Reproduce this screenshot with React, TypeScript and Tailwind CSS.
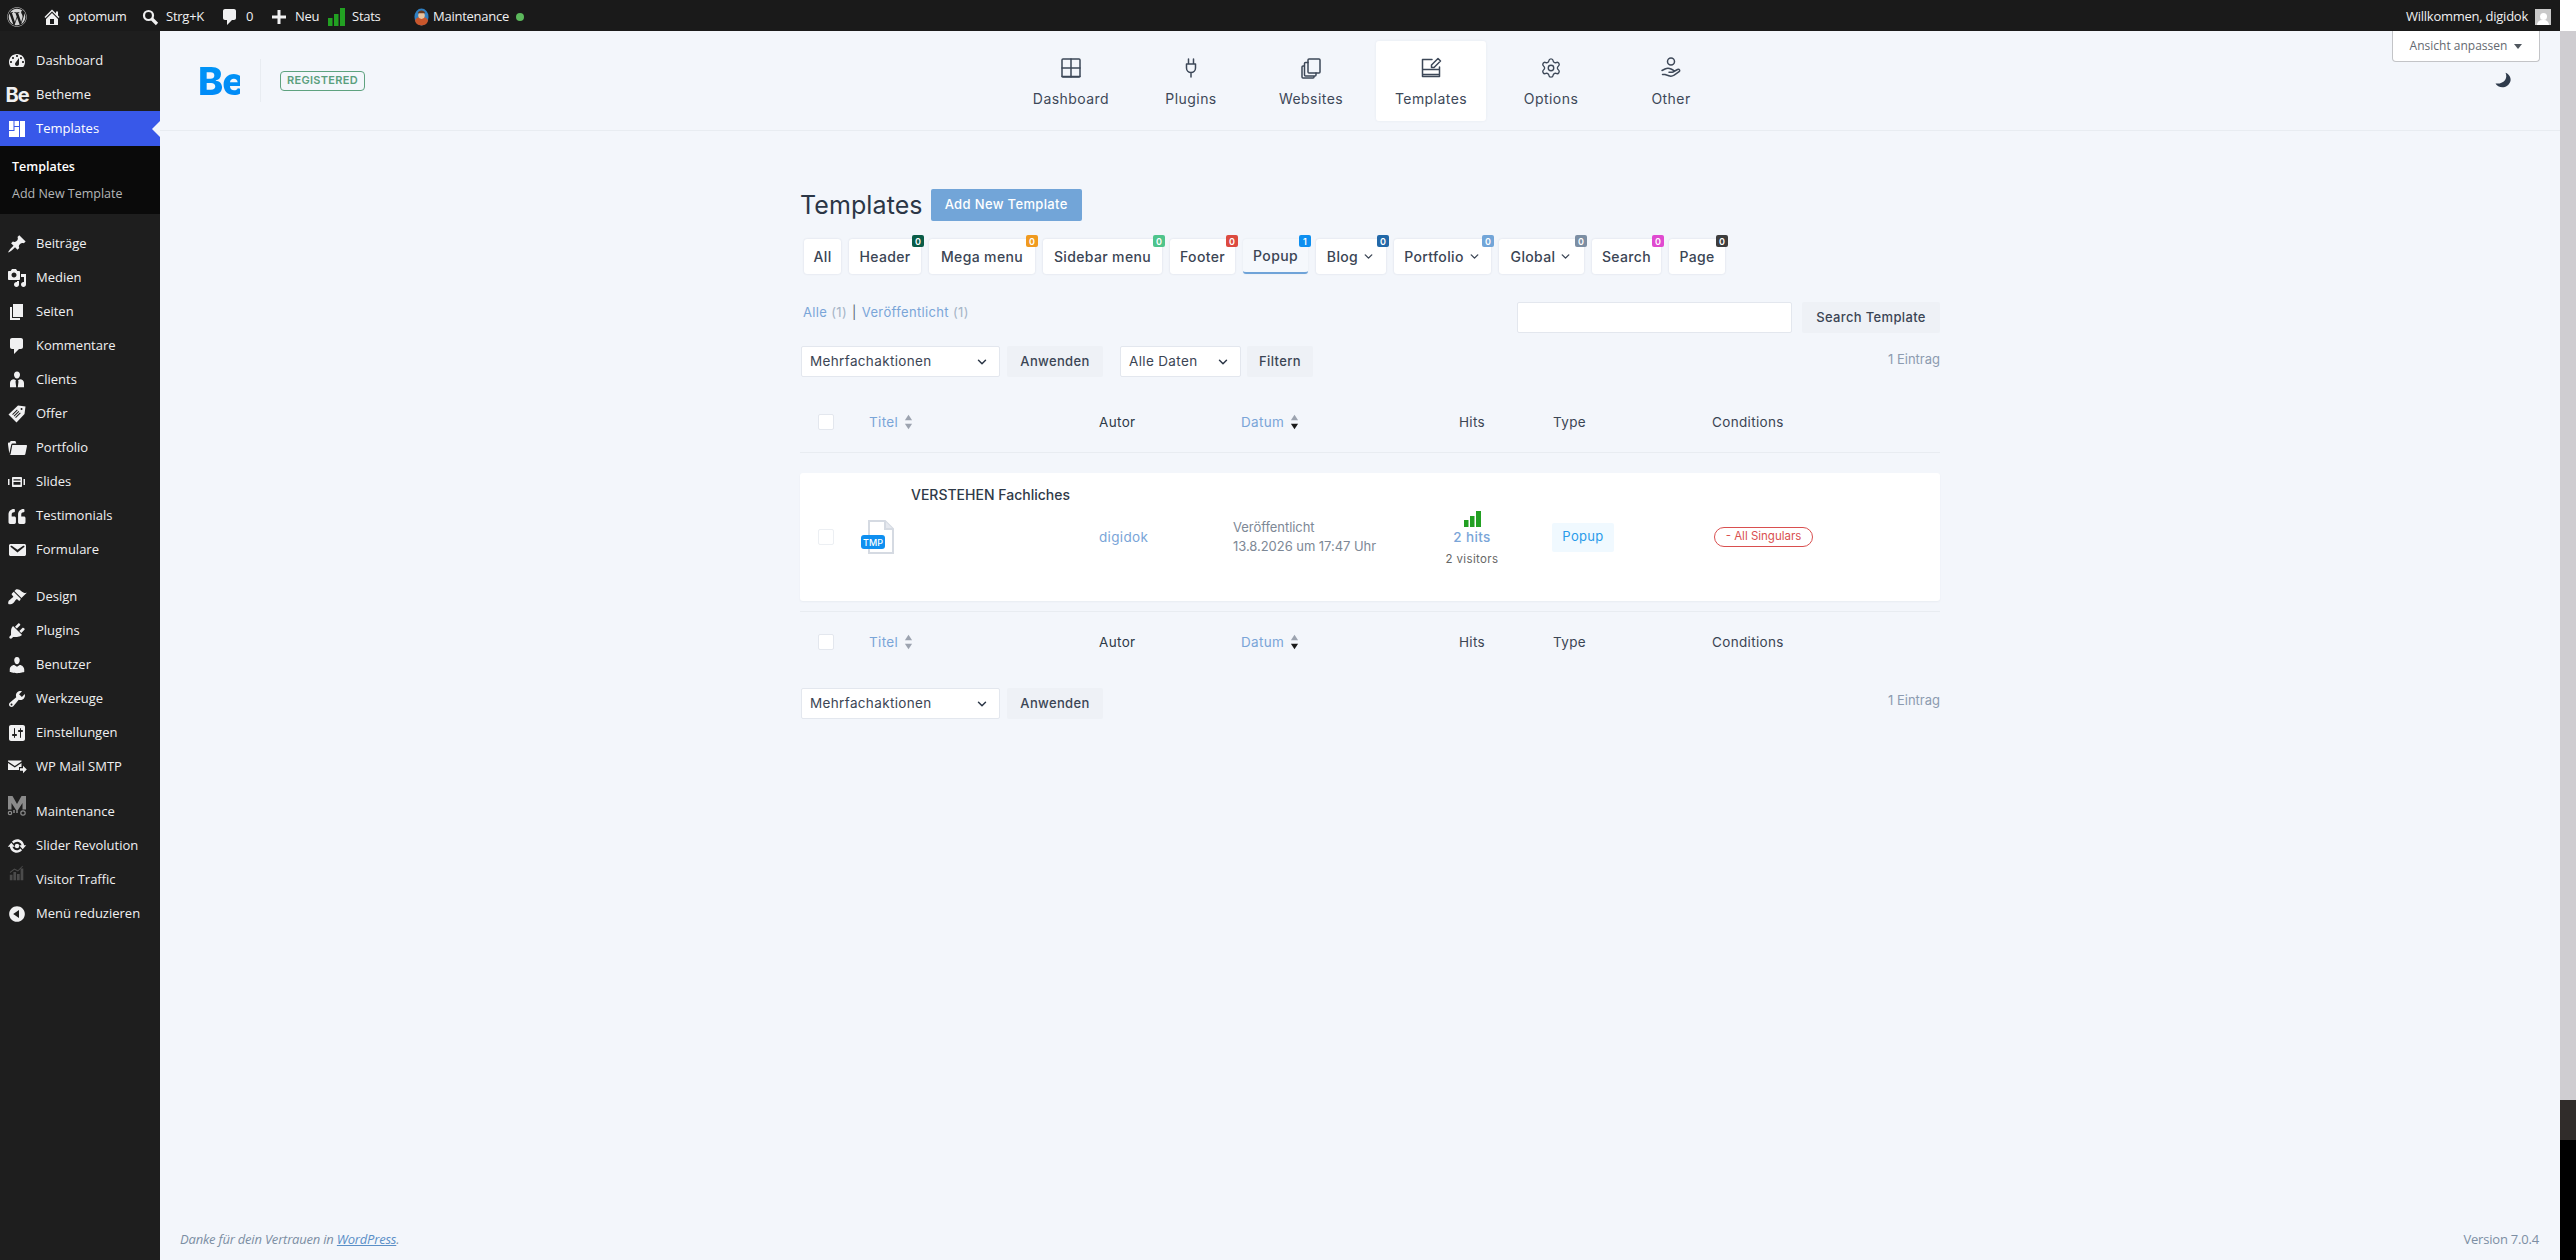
import React from "react";
import { FaWordpress, FaQuoteLeft } from "react-icons/fa";
import { Settings, ChevronDown } from "lucide-react";

const D = ({ d, className = "" }: { d: string; className?: string }) => (
  <svg viewBox="0 0 20 20" className={"w-5 h-5 fill-current " + className}>
    <path fillRule="evenodd" d={d} />
  </svg>
);

const P = {
  dashboard:
    "M3.76 16h12.48c1.1-1.37 1.76-3.11 1.76-5 0-4.42-3.58-8-8-8s-8 3.58-8 8c0 1.89.66 3.63 1.76 5zM10 4c.55 0 1 .45 1 1s-.45 1-1 1-1-.45-1-1 .45-1 1-1zM6 6c.55 0 1 .45 1 1s-.45 1-1 1-1-.45-1-1 .45-1 1-1zm8 0c.55 0 1 .45 1 1s-.45 1-1 1-1-.45-1-1 .45-1 1-1zm-5.37 5.55L12 7v6c0 1.1-.9 2-2 2s-2-.9-2-2c0-.57.24-1.08.63-1.45zM4 10c.55 0 1 .45 1 1s-.45 1-1 1-1-.45-1-1 .45-1 1-1zm12 0c.55 0 1 .45 1 1s-.45 1-1 1-1-.45-1-1 .45-1 1-1z",
  pin: "M10.44 3.02l1.82-1.82 6.36 6.35-1.83 1.82c-1.05-.68-2.48-.57-3.41.36l-.75.75c-.92.93-1.04 2.35-.35 3.41l-1.83 1.82-2.41-2.41-2.8 2.79c-.42.42-3.38 2.71-3.8 2.29s1.86-3.39 2.28-3.81l2.79-2.79L4.1 9.36l1.83-1.82c1.05.69 2.48.57 3.4-.36l.75-.75c.93-.92 1.05-2.35.36-3.41z",
  media:
    "M13 11V4c0-.55-.45-1-1-1h-1.67L9 1H5L3.67 3H2c-.55 0-1 .45-1 1v7c0 .55.45 1 1 1h10c.55 0 1-.45 1-1zM7 4.5c1.38 0 2.5 1.12 2.5 2.5S8.38 9.5 7 9.5 4.5 8.38 4.5 7 5.62 4.5 7 4.5zM14 6h5v10.5c0 1.38-1.12 2.5-2.5 2.5S14 17.88 14 16.5s1.12-2.5 2.5-2.5c.17 0 .34.02.5.05V9h-3V6zm-4 8.05V13h2v3.5c0 1.38-1.12 2.5-2.5 2.5S7 17.88 7 16.5 8.12 14 9.5 14c.17 0 .34.02.5.05z",
  page: "M6 15V2h10v13H6zm-1 1h8v2H3V5h2v11z",
  comment: "M5 2h9c1.1 0 2 .9 2 2v7c0 1.1-.9 2-2 2h-2l-5 5v-5H5c-1.1 0-2-.9-2-2V4c0-1.1.9-2 2-2z",
  users:
    "M10 9.25c-2.27 0-2.73-3.44-2.73-3.44C7 4.02 7.82 2 9.97 2c2.16 0 2.98 2.02 2.71 3.81 0 0-.41 3.44-2.68 3.44zm0 2.57L12.72 10c2.39 0 4.52 2.33 4.52 4.53v2.49s-3.65 1.13-7.24 1.13c-3.65 0-7.24-1.13-7.24-1.13v-2.49c0-2.25 1.94-4.48 4.47-4.48z",
  client:
    "M10 1.5c1.9 0 3 1.4 3 3.2S11.9 8.5 10 8.5 7 6.500 7 4.700 8.100 1.500 10 1.500zM7 9.300l2.100 1.200-.6 1 .7 5.800H3v-4.300c0-2 1.800-3.700 4-3.700zm6 0c2.200 0 4 1.700 4 3.700v4.300h-6.200l.7-5.800-.6-1z",
  offer:
    "M11 1.500l7.500 1-1 7.500-8 8.500L1.500 10.500zM14.500 4a1 1 0 1 0 .1 2 1 1 0 0 0-.1-2zM10 5.500l-4.800 4.800.7.700 4.800-4.800zm1.500 1.500l-4.800 4.800.7.700 4.800-4.800zM13 8.500l-4.800 4.800.7.700 4.800-4.800z",
  folder:
    "M1 5.500c0-.6.4-1 1-1h1l.6-1.500h4.800l.6 1.500 .3 1H5.500c-.6 0-1 .4-1.200 1L2.300 15.500 1 6.500zM5.300 7h14c.5 0 .8.400.7.900l-1.700 8.300c-.1.500-.5.800-1 .8H2.500c.5 0 1-.3 1.100-.8z",
  slides:
    "M6 5h8c.6 0 1 .4 1 1v8c0 .6-.4 1-1 1H6c-.6 0-1-.4-1-1V6c0-.6.4-1 1-1zm.5 2.200v1.300h7V7.200zm0 2.800v2.800h7V10zM1 7h1.500v6H1zm3 -.5v0zM16.500 7H18v6h-1.500z",
  mail: "M3.870 4h13.250C18.370 4 19 4.590 19 5.790v8.420c0 1.190-.63 1.790-1.880 1.790H3.870c-1.250 0-1.880-.6-1.880-1.790V5.790c0-1.200.63-1.790 1.880-1.790zm6.620 8.600l6.740-5.530c.24-.2.43-.66.13-1.070-.29-.41-.82-.42-1.170-.17l-5.700 3.860L4.800 5.830c-.35-.25-.88-.24-1.170.17-.3.41-.11.87.13 1.070z",
  brush:
    "M14.480 11.060L7.410 3.990l1.500-1.500c.5-.56 2.300-.47 3.510.32 1.210.8 1.430 1.280 2.910 2.100 1.180.64 2.450 1.260 4.450.85zm-.71.71L6.700 4.700 4.930 6.470c-.39.39-.39 1.020 0 1.410l1.060 1.060c.39.39.39 1.030 0 1.420-.6.6-1.430 1.110-2.210 1.690-.35.26-.7.53-1.010.84C1.430 13.230.78 15.780 1.400 17.070c1.290.62 3.840-.03 5.180-1.370.31-.31.58-.66.85-1.020.57-.78 1.080-1.610 1.690-2.210.39-.39 1.020-.39 1.410 0l1.060 1.060c.39.39 1.020.39 1.410 0z",
  plugin:
    "M13.110 4.360L9.870 7.600 8 5.730l3.240-3.240c.35-.34 1.050-.2 1.560.32.52.51.66 1.210.31 1.550zm-8 1.770l.91-1.120 9.010 9.010-1.190.84c-.71.71-2.630 1.160-3.820 1.160H6.140L4.900 17.260c-.59.59-1.540.59-2.120 0-.59-.58-.59-1.530 0-2.120l1.240-1.240v-3.880c0-1.130.4-3.190 1.090-3.890zm7.260 3.970l3.240-3.240c.34-.35 1.040-.21 1.550.31.52.51.66 1.210.31 1.550l-3.240 3.250z",
  tools:
    "M16.680 9.770c-1.340 1.340-3.300 1.670-4.950.99l-5.410 6.520c-.99.99-2.590.99-3.580 0s-.99-2.590 0-3.570l6.520-5.420c-.68-1.650-.35-3.610.99-4.950 1.280-1.280 3.120-1.620 4.720-1.060l-2.890 2.890 2.820 2.820 2.860-2.870c.53 1.580.18 3.390-1.080 4.650zM3.810 16.210c.4.39 1.040.39 1.430 0 .4-.4.4-1.040 0-1.430-.39-.4-1.030-.4-1.430 0-.39.39-.39 1.030 0 1.430z",
  settings:
    "M18 16V4c0-1.100-.9-2-2-2H4c-1.100 0-2 .9-2 2v12c0 1.100.9 2 2 2h12c1.100 0 2-.9 2-2zM8 11h1c.55 0 1 .45 1 1s-.45 1-1 1H8v1.500c0 .28-.22.5-.5.5s-.5-.22-.5-.5V13H6c-.55 0-1-.45-1-1s.45-1 1-1h1V5.500c0-.28.22-.5.5-.5s.5.22.5.5V11zm5-2h-1c-.55 0-1-.45-1-1s.45-1 1-1h1V5.500c0-.28.22-.5.5-.5s.5.22.5.5V7h1c.55 0 1 .45 1 1s-.45 1-1 1h-1v5.500c0 .28-.22.5-.5.5s-.5-.22-.5-.5V9z",
  collapse: "M10 2.160c4.330 0 7.840 3.510 7.840 7.840s-3.510 7.840-7.840 7.840S2.160 14.330 2.160 10 5.710 2.160 10 2.160zm2 11.720V6.120L6.180 9.970z",
  update:
    "M10.200 3.280c3.530 0 6.430 2.610 6.920 6h2.080l-3.500 4-3.500-4h2.320c-.45-1.970-2.210-3.450-4.320-3.450-1.450 0-2.730.71-3.540 1.780L4.950 5.660C6.230 4.200 8.110 3.280 10.200 3.280zm-.4 13.440c-3.520 0-6.430-2.610-6.920-6H.8l3.500-4c1.170 1.330 2.330 2.670 3.500 4H5.480c.45 1.970 2.210 3.450 4.320 3.450 1.450 0 2.730-.71 3.540-1.780l1.710 1.950c-1.280 1.460-3.150 2.380-5.250 2.380z",
  home: "M16 8.500l1.530 1.530-1.060 1.060L10 4.620l-6.470 6.470-1.060-1.060L10 2.500l4 4v-2h2v4zm-6-2.460l6 5.990V18H4v-5.970zM12 17v-5H8v5h4z",
  templates: "M2 2h4.500v9H2zM7.500 2H12v5H7.500zM13 2h5v16h-5zM7.500 8H12v4H7.500zM2 12h10v6H2z",
};

const Row = ({ icon, label }: { icon: React.ReactNode; label: string }) => (
  <div className="flex h-[34px] items-center pt-[2px] text-[#f0f0f1]">
    <div className="flex w-[34px] justify-center text-[#f0f0f1]">{icon}</div>
    <span className="pl-[2px]">{label}</span>
  </div>
);

const Sidebar = () => (
  <aside className="w-[160px] shrink-0 bg-[#1e1e1e] pt-[12px] text-[13px] [font-family:'Open_Sans',sans-serif]">
    <Row icon={<D d={P.dashboard} />} label="Dashboard" />
    <Row icon={<span className="text-[20px] leading-none font-bold [font-family:Inter,sans-serif] tracking-[-1px]">Be</span>} label="Betheme" />
    <div className="relative flex h-[35px] items-center pt-[1px] bg-[#3858e9] text-white">
      <div className="flex w-[34px] justify-center"><D d={P.templates} /></div>
      <span className="pl-[2px]">Templates</span>
      <div className="absolute right-0 top-[10px] h-0 w-0 border-y-[8px] border-r-[8px] border-y-transparent border-r-[#f3f6fb]" />
    </div>
    <div className="flex h-[68px] flex-col justify-center gap-[7px] bg-[#0a0a0a] pl-[12px] text-[12.5px]">
      <div className="h-[20px] leading-[20px] font-semibold text-white">Templates</div>
      <div className="h-[20px] leading-[20px] text-[#b4b6b8]">Add New Template</div>
    </div>
    <div className="mt-[12px]">
      <Row icon={<D d={P.pin} />} label="Beiträge" />
      <Row icon={<D d={P.media} />} label="Medien" />
      <Row icon={<D d={P.page} />} label="Seiten" />
      <Row icon={<D d={P.comment} />} label="Kommentare" />
      <Row icon={<D d={P.client} />} label="Clients" />
      <Row icon={<D d={P.offer} />} label="Offer" />
      <Row icon={<D d={P.folder} />} label="Portfolio" />
      <Row icon={<D d={P.slides} />} label="Slides" />
      <Row icon={<FaQuoteLeft className="h-[17px] w-[18px]" />} label="Testimonials" />
      <Row icon={<D d={P.mail} />} label="Formulare" />
    </div>
    <div className="mt-[13px]">
      <Row icon={<D d={P.brush} />} label="Design" />
      <Row icon={<D d={P.plugin} />} label="Plugins" />
      <Row icon={<D d={P.users} />} label="Benutzer" />
      <Row icon={<D d={P.tools} />} label="Werkzeuge" />
      <Row icon={<D d={P.settings} />} label="Einstellungen" />
      <Row
        icon={
          <svg viewBox="0 0 20 20" className="h-5 w-5 fill-current">
            <path d="M1 3.500h13.500v.9L7.800 9 1 4.400zM1 6l6.800 4.600L14.500 6v4h-2.500v3H1zM13 11.200h3v-2.400l3.800 3.700-3.800 3.700v-2.400h-3z" />
          </svg>
        }
        label="WP Mail SMTP"
      />
    </div>
    <div className="mt-[11px]">
      <Row
        icon={
          <svg viewBox="0 0 20 22" className="h-[22px] w-5 -translate-y-[6px]">
            <path fill="#8a8a8a" d="M1 1h4.500L10 9l4.500-8H19v13.500h-3.500V8L11 15H9L4.500 8v6.500H1z" />
            <circle cx="3" cy="18" r="1.700" fill="none" stroke="#8a8a8a" strokeWidth="1.200" />
            <circle cx="16" cy="18" r="2.200" fill="none" stroke="#8a8a8a" strokeWidth="1.200" />
            <path stroke="#8a8a8a" strokeWidth="1.500" d="M7 15v3M10 15v3" />
          </svg>
        }
        label="Maintenance"
      />
      <Row
        icon={
          <svg viewBox="0 0 20 20" className="h-5 w-5 fill-current">
            <path d={P.update} />
            <circle cx="10" cy="10" r="2.200" />
          </svg>
        }
        label="Slider Revolution"
      />
      <Row
        icon={
          <svg viewBox="0 0 20 20" className="h-[18px] w-[18px] -translate-y-[7px] fill-[#4b4b4b]">
            <path d="M2 12h3v6H2zM6 9h3v9H6zM10 11h3v7h-3zM14 5h3v13h-3zM2 9l5-4 4 2 5-5 .6.6-5.500 5.700-4-2-4.700 3.700z" />
          </svg>
        }
        label="Visitor Traffic"
      />
      <Row icon={<D d={P.collapse} />} label="Menü reduzieren" />
    </div>
  </aside>
);

const AdminBar = () => (
  <header className="flex h-[31px] shrink-0 items-center bg-[#1a1a1a] pt-[2px] text-[13px] tracking-[-0.25px] text-[#f0f0f1] [font-family:'Open_Sans',sans-serif]">
    <div className="flex w-[42px] pl-[7px]"><FaWordpress className="h-5 w-5 text-[#d4d4d4]" /></div>
    <div className="flex w-[98px] items-center gap-[6px]"><D d={P.home} /><span>optomum</span></div>
    <div className="flex w-[80px] items-center gap-[6px]">
      <svg viewBox="0 0 20 20" className="h-5 w-5 fill-none stroke-current"><circle cx="8.500" cy="8.500" r="4.500" strokeWidth="2.200" /><path d="M12 12l5 5" strokeWidth="3.200" /></svg>
      <span>Strg+K</span>
    </div>
    <div className="flex w-[49px] items-center gap-[6px]"><D d={P.comment} /><span>0</span></div>
    <div className="flex w-[59px] items-center gap-[6px]">
      <svg viewBox="0 0 20 20" className="h-5 w-5 fill-current"><path d="M8.500 3h3v5.500H17v3h-5.500V17h-3v-5.500H3v-3h5.500z" /></svg>
      <span>Neu</span>
    </div>
    <div className="flex w-[86px] items-center gap-[7px]">
      <svg viewBox="0 0 17 18" className="h-[18px] w-[17px] fill-[#22a022]"><path d="M0 10h4.500v8H0zM6 6h4.500v12H6zM12 0h5v18h-5z" /></svg>
      <span>Stats</span>
    </div>
    <div className="flex items-center gap-[4px]">
      <svg viewBox="0 0 16 18" className="h-[18px] w-[15px]">
        <ellipse cx="8" cy="9" rx="7.500" ry="9" fill="#2f7fc1" />
        <path d="M1 13c1-3 3-4 7-4s6 1 7 4c-1 3-3 5-7 5s-6-2-7-5z" fill="#c9562b" />
        <circle cx="8" cy="7.500" r="3.500" fill="#e8c39e" />
        <path d="M4 5c1-4 7-4 8 0z" fill="#6b3a1e" />
      </svg>
      <span>Maintenance</span>
      <span className="ml-[3px] h-2 w-2 rounded-full bg-[#5cb85c]" />
    </div>
    <div className="ml-auto flex items-center gap-[7px] pr-[9px]">
      <span>Willkommen, digidok</span>
      <div className="flex h-4 w-4 flex-col items-center justify-end overflow-hidden bg-[#c9c9c9]">
        <div className="h-[7px] w-[7px] rounded-full bg-white" />
        <div className="h-[5px] w-3 rounded-t-full bg-white" />
      </div>
    </div>
  </header>
);

const s15 = { strokeWidth: 1.5 };
const NavIcon = ({ children }: { children: React.ReactNode }) => (
  <svg viewBox="0 0 24 24" className="h-[24px] w-[24px] fill-none stroke-[#3d4858]" strokeLinecap="round" strokeLinejoin="round" {...s15}>
    {children}
  </svg>
);

const navs: [string, React.ReactNode][] = [
  ["Dashboard", <NavIcon><rect x="3" y="3" width="18" height="18" rx="1" /><path d="M3 12h18M12 3v18M3 20.500h18" /></NavIcon>],
  ["Plugins", <NavIcon><path d="M9.500 3v5M14.500 3v5M7.500 8h9v4a4.500 4.500 0 0 1-9 0zM12 16.500V21" /></NavIcon>],
  ["Websites", <NavIcon><rect x="9" y="3" width="12" height="14" rx="1" /><path d="M9 6.500H6.500a1 1 0 0 0-1 1V19a1 1 0 0 0 1 1H16a1 1 0 0 0 1-1v-2M5.500 10H4a1 1 0 0 0-1 1v10a1 1 0 0 0 1 1h10a1 1 0 0 0 1-1v-1" /></NavIcon>],
  ["Templates", <NavIcon><path d="M13 3.500H3.500v17h17V11M3.500 13.500h17M3.500 18.500h17" /><path d="M19 2.500l2.500 2.500-6.500 6.500h-2.500V9z" /></NavIcon>],
  ["Options", <Settings className="h-[22px] w-[22px] text-[#3d4858]" strokeWidth={1.5} />],
  ["Other", <NavIcon><circle cx="12" cy="5.500" r="3.500" /><path d="M3 14.500l3-1.500c2-1 4-1 6 0l2 1c1.200.6.8 2.300-.6 2.300H10M14 16l4.500-2.500c1.800-.8 3 1 1.600 2.200l-5 3.500c-1.600 1-3.500 1.200-5.300.6L6 18.500H3.500" /></NavIcon>],
];

const tabs: [string, number, string | null, string, boolean][] = [
  ["All", 37, null, "", false],
  ["Header", 72, "0", "bg-[#0a5c47]", false],
  ["Mega menu", 106, "0", "bg-[#f09a1f]", false],
  ["Sidebar menu", 119, "0", "bg-[#4fc48c]", false],
  ["Footer", 65, "0", "bg-[#dc4a3f]", false],
  ["Popup", 65, "1", "bg-[#0e8ff0]", false],
  ["Blog", 70, "0", "bg-[#2268a8]", true],
  ["Portfolio", 97, "0", "bg-[#72a5d8]", true],
  ["Global", 85, "0", "bg-[#7c8ea3]", true],
  ["Search", 69, "0", "bg-[#e04ad0]", false],
  ["Page", 56, "0", "bg-[#3d3d3d]", false],
];

const Tabs = () => (
  <div className="mt-[18px] ml-[4px] flex gap-[8px]">
    {tabs.map(([label, w, count, color, chevron]) => (
      <div
        key={label}
        style={{ width: w }}
        className={
          "relative flex h-[35px] items-center justify-center gap-[4px] rounded-[3px] text-[14px] text-[#3b4554] " +
          (label === "Popup"
            ? "border-b-[2px] border-[#6fa3d8] bg-[#f5f8fc] shadow-[0_0_2px_rgba(30,50,80,0.08)]"
            : "bg-white shadow-[0_0_2px_rgba(30,50,80,0.15)]")
        }
      >
        <span className="font-medium">{label}</span>
        {chevron && <ChevronDown className="h-[13px] w-[13px]" strokeWidth={2.5} />}
        {count && (
          <span className={"absolute -top-[4px] -right-[3px] flex h-[12px] w-[12px] items-center justify-center rounded-[2px] text-[9px] leading-none font-semibold tracking-normal text-white " + color}>
            {count}
          </span>
        )}
      </div>
    ))}
  </div>
);

const Select = ({ label, w }: { label: string; w: string }) => (
  <div className={"flex h-[31px] items-center justify-between rounded-[2px] border border-[#e3e7ee] bg-white pr-[10px] pl-[8px] text-[13.500px] text-[#3b4554] " + w}>
    <span>{label}</span>
    <ChevronDown className="h-[14px] w-[14px] text-[#2b3646]" strokeWidth={2.5} />
  </div>
);

const Btn = ({ label, w }: { label: string; w: string }) => (
  <div className={"flex h-[31px] items-center justify-center rounded-[2px] bg-[#eef1f6] text-[13px] font-medium text-[#3b4554] " + w}>{label}</div>
);

const Sort = ({ active }: { active?: boolean }) => (
  <svg viewBox="0 0 10 16" className="h-[16px] w-[9px]">
    <path d="M5 0l4 6H1z" fill="#9ca3af" />
    <path d="M5 16L1 10h8z" fill={active ? "#1a1a1a" : "#9ca3af"} />
  </svg>
);

const gridCols = "grid grid-cols-[69px_230px_134px_192px_94px_193px_1fr]";

const Check = ({ light }: { light?: boolean }) => (
  <div className={"ml-[18px] h-4 w-4 rounded-[2px] border bg-white " + (light ? "border-[#eceff3]" : "border-[#e3e7ee]")} />
);

const Head = ({ border }: { border: string }) => (
  <div className={gridCols + " h-[61px] items-center text-[13.500px] text-[#3b4554] " + border}>
    <Check />
    <div className="flex items-center gap-[6px] text-[#7aa5d8]">Titel <Sort /></div>
    <div className="text-[#2f3a48]">Autor</div>
    <div className="ml-[8px] flex items-center gap-[6px] text-[#7aa5d8]">Datum <Sort active /></div>
    <div className="text-center">Hits</div>
    <div className="pl-[34px]">Type</div>
    <div>Conditions</div>
  </div>
);

const App = () => (
  <div className="flex h-screen w-full overflow-hidden">
    <div className="flex min-w-0 flex-1 flex-col">
      <AdminBar />
      <div className="flex min-h-0 flex-1">
        <Sidebar />
        <main className="relative flex min-w-0 flex-1 flex-col bg-[#f3f6fb] tracking-[0.35px] [font-family:Inter,sans-serif]">
          <div className="absolute top-0 right-[20px] flex h-[31px] w-[148px] items-center justify-center gap-[7px] rounded-b-[4px] border border-t-0 border-[#c3c4c7] bg-white text-[12px] tracking-normal text-[#646970] [font-family:'Open_Sans',sans-serif]">
            Ansicht anpassen
            <span className="h-0 w-0 border-x-[4px] border-t-[5px] border-x-transparent border-t-[#50575e]" />
          </div>
          <div className="flex h-[100px] shrink-0 items-center border-b border-[#e8ecf1] pl-[38px]">
            <div className="w-[42px] bg-gradient-to-b from-[#0095f6] to-[#0089f7] bg-clip-text text-[38px] leading-none font-extrabold tracking-[-1px] text-transparent">Be</div>
            <div className="ml-[20px] h-[43px] w-px bg-[#e8ecf1]" />
            <div className="ml-[19px] flex h-[20px] w-[85px] items-center justify-center rounded-[4px] border border-[#5ea27f] text-[11px] font-semibold tracking-[0.3px] text-[#5a9f7d]">REGISTERED</div>
            <nav className="mt-[10px] ml-[651px] flex gap-[10px] self-start">
              {navs.map(([label, icon]) => (
                <div key={label} className={"flex h-[80px] w-[110px] flex-col items-center rounded-[3px] pt-[15px] " + (label === "Templates" ? "bg-white shadow-[0_0_3px_rgba(30,50,80,0.06)]" : "")}>
                  <div className="flex h-[24px] items-center">{icon}</div>
                  <span className="mt-[8px] text-[14px] tracking-[0.45px] text-[#3d4858]">{label}</span>
                </div>
              ))}
            </nav>
            <svg viewBox="0 0 24 24" className="mr-[47px] ml-auto h-5 w-5 fill-[#2f3b4c]">
              <path d="M15 2C18 8 14 16 3 15c3 6 15 7 18-3 1-4-2-9-6-10z" />
            </svg>
          </div>
          <div className="ml-[640px] w-[1140px]">
            <div className="mt-[58px] flex items-center gap-[8px]">
              <h1 className="text-[25px] leading-[32px] font-normal text-[#2b3646] tracking-[0.1px]">Templates</h1>
              <div className="flex h-[32px] w-[151px] items-center justify-center rounded-[2px] bg-[#72a5d8] text-[13px] font-medium text-white">Add New Template</div>
            </div>
            <Tabs />
            <div className="mt-[28px] flex justify-between">
              <div className="flex h-[22px] items-center gap-[5px] pl-[3px] text-[13px] text-[#7aa5d8]">
                <span>Alle <span className="text-[#a5b4c6]">(1)</span></span>
                <span className="text-[#5b6675]">|</span>
                <span>Veröffentlicht <span className="text-[#a5b4c6]">(1)</span></span>
              </div>
              <div className="flex gap-[10px]">
                <div className="h-[31px] w-[275px] rounded-[2px] border border-[#e3e7ee] bg-white" />
                <Btn label="Search Template" w="w-[138px]" />
              </div>
            </div>
            <div className="mt-[13px] flex items-start">
              <Select label="Mehrfachaktionen" w="ml-[1px] w-[199px]" />
              <Btn label="Anwenden" w="ml-[7px] w-[96px]" />
              <Select label="Alle Daten" w="ml-[17px] w-[121px]" />
              <Btn label="Filtern" w="ml-[6px] w-[66px]" />
              <span className="mt-[4px] ml-auto text-[13px] tracking-normal text-[#8c9bb0]">1 Eintrag</span>
            </div>
            <div className="mt-[15px]">
              <Head border="border-b border-[#e8ecf1]" />
            </div>
            <div className={gridCols + " mt-[20px] h-[128px] items-center rounded-[3px] bg-white text-[13px] shadow-[0_1px_2px_rgba(30,50,80,0.05)]"}>
              <Check light />
              <div className="flex h-full flex-col items-start">
                <div className="mt-[12px] ml-[42px] h-[20px] whitespace-nowrap text-[14px] leading-[20px] font-medium tracking-normal text-[#2f3a48]">VERSTEHEN Fachliches</div>
                <div className="relative mt-[14px] -ml-[8px] h-[36px] w-[34px]">
                  <svg viewBox="0 0 28 36" className="absolute top-0 right-0 h-[36px] w-[28px] fill-white stroke-[#d5dae2]" strokeWidth="2">
                    <path d="M2 2h16l8 8v24H2z" />
                    <path d="M18 2v8h8" fill="#e5e8ee" />
                  </svg>
                  <div className="absolute top-[16px] left-0 flex h-[14px] w-[24px] items-center justify-center rounded-[3px] bg-[#0e8ff0] text-[9px] leading-none font-medium tracking-normal text-white">TMP</div>
                </div>
              </div>
              <div className="text-[13.500px] text-[#7aa5d8]">digidok</div>
              <div className="text-[13px] leading-[19px] tracking-[-0.05px] text-[#7d8896]">
                <div>Veröffentlicht</div>
                <div>13.8.2026 um 17:47 Uhr</div>
              </div>
              <div className="mt-[6px] flex flex-col items-center">
                <svg viewBox="0 0 17 16" className="h-[16px] w-[17px] fill-[#22a022]"><path d="M0 9h4.500v7H0zM6 5h4.500v11H6zM12 0h5v16h-5z" /></svg>
                <div className="h-[20px] text-[13.500px] leading-[20px] font-medium text-[#7aa5d8]">2 hits</div>
                <div className="mt-[2px] text-[11.500px] leading-[20px] text-[#666]">2 visitors</div>
              </div>
              <div className="pl-[33px]">
                <div className="flex h-[29px] w-[62px] items-center justify-center rounded-[2px] bg-[#f0f9ff] text-[#2a9bea]">Popup</div>
              </div>
              <div className="pl-[2px]">
                <div className="flex h-[20px] w-[99px] items-center justify-center rounded-full border border-[#d94f4f] text-[11.500px] tracking-normal text-[#d94f4f]">- All Singulars</div>
              </div>
            </div>
            <div className="mt-[10px]">
              <Head border="border-t border-[#e8ecf1]" />
            </div>
            <div className="mt-[16px] flex items-start">
              <Select label="Mehrfachaktionen" w="ml-[1px] w-[199px]" />
              <Btn label="Anwenden" w="ml-[7px] w-[96px]" />
              <span className="mt-[3px] ml-auto text-[13px] tracking-normal text-[#8c9bb0]">1 Eintrag</span>
            </div>
          </div>
          <footer className="mt-auto flex h-[40px] items-center justify-between pr-[21px] pl-[20px] text-[13px] tracking-[-0.2px] text-[#7c8ea3] [font-family:'Open_Sans',sans-serif]">
            <span className="italic">Danke für dein Vertrauen in <span className="text-[#5a8fc7] underline">WordPress</span>.</span>
            <span>Version 7.0.4</span>
          </footer>
        </main>
      </div>
    </div>
    <div className="flex w-4 shrink-0 flex-col">
      <div className="h-[31px] bg-white" />
      <div className="flex-1 bg-[#cfcdd1]" />
      <div className="h-[40px] bg-[#302c2a]" />
      <div className="h-[120px] bg-black" />
    </div>
  </div>
);

export default App;
